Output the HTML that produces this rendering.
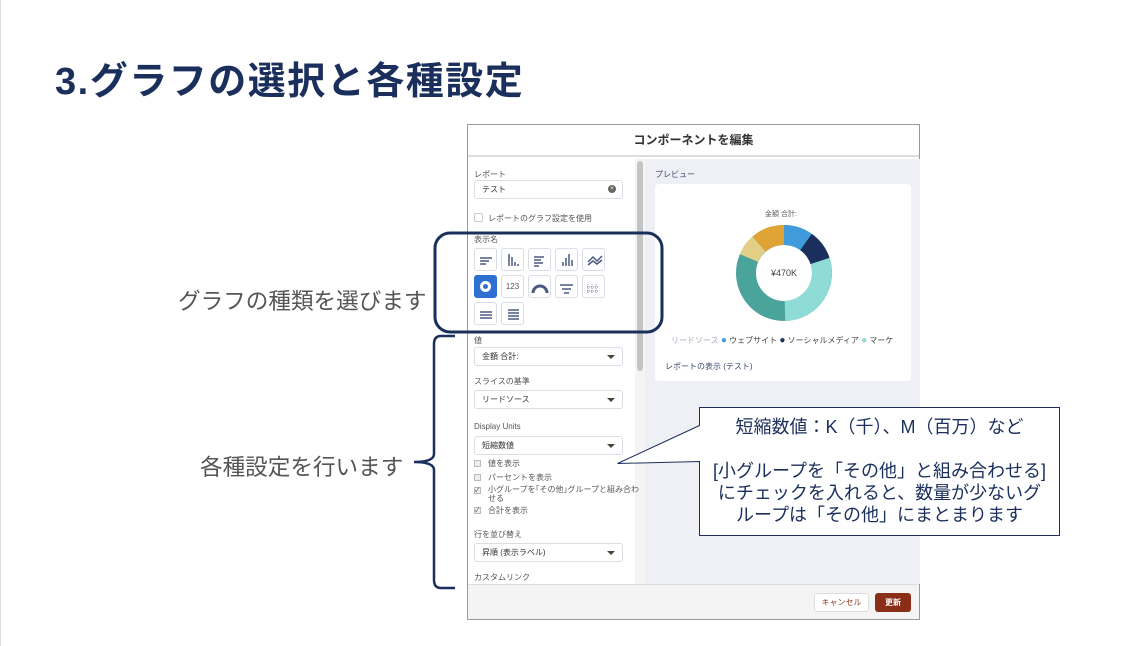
<!DOCTYPE html>
<html><head><meta charset="utf-8"><style>
*{box-sizing:border-box;margin:0;padding:0}
body{width:1148px;height:646px;background:#fff;position:relative;overflow:hidden;font-family:"Liberation Sans","Noto Sans CJK JP",sans-serif}
.abs{position:absolute}
.title{left:55px;top:50px;font-size:38px;font-weight:bold;color:#1b2f5c;white-space:nowrap;letter-spacing:1.5px}
.lbl{font-size:22.6px;color:#555;white-space:nowrap}
.dlg{left:467px;top:124px;width:453px;height:496px;border:1px solid #9a9a9a;background:#fff}
.hdr{height:32px;border-bottom:2px solid #ddd;text-align:center;font-size:12px;font-weight:bold;color:#333;line-height:30px}
.sm{font-size:8px;color:#555;white-space:nowrap}
.inp{position:absolute;left:6px;width:149px;height:19px;border:1px solid #d8dde6;border-radius:3px;font-size:8px;color:#333;padding-left:7px;line-height:17px;background:#fff}
.inp .ar{position:absolute;right:7px;top:7px;width:0;height:0;border-left:4px solid transparent;border-right:4px solid transparent;border-top:4px solid #444}
.ico{position:absolute;width:23px;height:23px;border:1px solid #d8dde6;border-radius:3px;background:#fff}
.cb{position:absolute;left:6px;width:7px;height:7px;border:1px solid #bbb;background:#eee;font-size:6px;line-height:6px;color:#333}
</style></head><body>
<div class="abs" style="left:0;top:0;width:1px;height:646px;background:#ddd"></div>
<div class="abs title">3.グラフの選択と各種設定</div>
<div class="abs lbl" style="left:178px;top:283px">グラフの種類を選びます</div>
<div class="abs lbl" style="left:200px;top:449px">各種設定を行います</div>

<div class="abs dlg">
 <div class="hdr">コンポーネントを編集</div>
 <div class="abs" style="left:177px;top:34px;width:275px;height:425px;background:#eef0f5"></div>
 <div class="abs" style="left:167px;top:34px;width:10px;height:425px;background:#f4f4f4"></div>
 <div class="abs" style="left:169px;top:36px;width:6px;height:210px;background:#c4c4c4;border-radius:3px"></div>
 <div class="abs sm" style="left:6px;top:44px">レポート</div>
 <div class="inp" style="top:55px">テスト<span style="position:absolute;right:6px;top:4px;width:8px;height:8px;border-radius:50%;background:#666;color:#fff;font-size:6px;line-height:8px;text-align:center">×</span></div>
 <div class="abs" style="left:6px;top:88px;width:9px;height:9px;border:1px solid #ccc;border-radius:2px"></div>
 <div class="abs sm" style="left:20px;top:88px">レポートのグラフ設定を使用</div>
 <div class="abs sm" style="left:6px;top:109px">表示名</div>
 <div class="ico" style="left:6px;top:123px"></div>
 <div class="ico" style="left:33px;top:123px"></div>
 <div class="ico" style="left:60px;top:123px"></div>
 <div class="ico" style="left:87px;top:123px"></div>
 <div class="ico" style="left:114px;top:123px"></div>
 <div class="ico" style="left:6px;top:150px;background:#2f6fd1;border-color:#2f6fd1"><div style="position:absolute;left:5px;top:5px;width:11px;height:11px;border:3px solid #fff;border-radius:50%"></div></div>
 <div class="ico" style="left:33px;top:150px;font-size:8px;color:#555;text-align:center;line-height:21px">123</div>
 <div class="ico" style="left:60px;top:150px"></div>
 <div class="ico" style="left:87px;top:150px"></div>
 <div class="ico" style="left:114px;top:150px"></div>
 <div class="ico" style="left:6px;top:177px"></div>
 <div class="ico" style="left:33px;top:177px"></div>
 <svg class="abs" style="left:0;top:123px" width="140" height="80">
  <g stroke="#4a5a80" stroke-width="1.5">
   <path d="M12 10h12M12 13h9M12 16h6"/>
   <path d="M41 6v12M44 9v9M47 14v4M50 16v2"/>
   <path d="M66 9h10M66 12h7M66 15h9M66 18h5"/>
   <path d="M95 14v4M98 10v8M101 6v12M104 12v6"/>
   <path d="M120 14l5-5 4 4 5-5M120 17l5-4 4 3 5-4" fill="none"/>
   <path d="M65 45a7 7 0 0 1 14 0" fill="none" stroke-width="3"/>
   <path d="M92 37h13M94 41h9M96 45h5"/>
   <path d="M120 36v10M124 36v10M128 36v10M119 39h11M119 43h11" stroke-width="0.7" stroke-dasharray="1 1"/>
   <path d="M12 64h12M12 67h12M12 70h12"/>
   <path d="M40 62h11M40 65h11M40 68h11M40 71h11"/>
  </g>
 </svg>
 <div class="abs sm" style="left:6px;top:210px">値</div>
 <div class="inp" style="top:222px">金額 合計:<span class="ar"></span></div>
 <div class="abs sm" style="left:6px;top:251px">スライスの基準</div>
 <div class="inp" style="top:265px">リードソース<span class="ar"></span></div>
 <div class="abs sm" style="left:6px;top:297px">Display Units</div>
 <div class="inp" style="top:311px">短縮数値<span class="ar"></span></div>
 <div class="cb" style="top:335px"></div><div class="abs sm" style="left:20px;top:333px">値を表示</div>
 <div class="cb" style="top:349px"></div><div class="abs sm" style="left:20px;top:347px">パーセントを表示</div>
 <div class="cb" style="top:362px">✓</div><div class="abs sm" style="left:20px;top:360px;line-height:9px">小グループを｢その他｣グループと組み合わ<br>せる</div>
 <div class="cb" style="top:382px">✓</div><div class="abs sm" style="left:20px;top:380px">合計を表示</div>
 <div class="abs sm" style="left:6px;top:404px">行を並び替え</div>
 <div class="inp" style="top:418px">昇順 (表示ラベル)<span class="ar"></span></div>
 <div class="abs sm" style="left:6px;top:447px">カスタムリンク</div>
 <div class="abs" style="left:0;top:459px;width:451px;height:35px;background:#f4f4f4;border-top:1px solid #ddd"></div>
 <div class="abs" style="left:346px;top:468px;width:55px;height:19px;background:#fff;border:1px solid #ddd;border-radius:3px;font-size:8px;color:#8a3a20;text-align:center;line-height:17px">キャンセル</div>
 <div class="abs" style="left:407px;top:468px;width:36px;height:19px;background:#8a2e17;border-radius:3px;font-size:8px;color:#fff;text-align:center;line-height:19px;font-weight:bold">更新</div>
 <div class="abs sm" style="left:187px;top:44px;color:#3b4a70">プレビュー</div>
 <div class="abs" style="left:187px;top:59px;width:256px;height:197px;background:#fff;border-radius:4px"></div>
 <div class="abs sm" style="left:297px;top:84px;font-size:7px">金額 合計:</div>
 <svg class="abs" style="left:266px;top:98px" width="100" height="100" viewBox="-50 -50 100 100">
  <g fill="none" stroke-width="20">
   <circle r="38" stroke="#4ba49c"/>
   <path d="M0-38A38 38 0 0 1 22-31" stroke="#3f9bdb"/>
   <path d="M22-31A38 38 0 0 1 36-12" stroke="#1b2f5c"/>
   <path d="M36-12A38 38 0 0 1 1 38" stroke="#8fdcd6"/>
   <path d="M-35-15A38 38 0 0 1 -25-29" stroke="#e2cf85"/>
   <path d="M-25-29A38 38 0 0 1 0-38" stroke="#e0a436"/>
  </g>
  <text x="0" y="3" text-anchor="middle" font-size="9" fill="#444" font-family="Liberation Sans">¥470K</text>
 </svg>
 <div class="abs sm" style="left:203px;top:210px;font-size:8px;color:#aab">リードソース <span style="color:#3f9bdb;font-size:10px">●</span> <span style="color:#444">ウェブサイト</span> <span style="color:#1b2f5c;font-size:10px">●</span> <span style="color:#444">ソーシャルメディア</span> <span style="color:#8fdcd6;font-size:10px">●</span> <span style="color:#444">マーケ</span></div>
 <div class="abs sm" style="left:197px;top:236px;color:#3b4a70">レポートの表示 (テスト)</div>
</div>

<svg class="abs" style="left:0;top:0" width="1148" height="646">
 <rect x="435" y="233" width="227" height="99" rx="15" fill="none" stroke="#1b2f5c" stroke-width="3"/>
 <path d="M455 336h-14q-7 0-7 8v110q0 8-20 8q20 0 20 8v110q0 8 7 8h14" fill="none" stroke="#1b2f5c" stroke-width="2.5"/>
 <path d="M699.5 407.5h360v128h-360v-74l-82 2l82-38z" fill="#fff" stroke="#1b2f5c" stroke-width="1"/>
</svg>
<div class="abs" style="left:700px;top:416px;width:359px;text-align:center;font-size:18px;color:#1b2f5c;line-height:22px">短縮数値：K（千）、M（百万）など<br><br>[小グループを「その他」と組み合わせる]<br>にチェックを入れると、数量が少ないグ<br>ループは「その他」にまとまります</div>
</body></html>
